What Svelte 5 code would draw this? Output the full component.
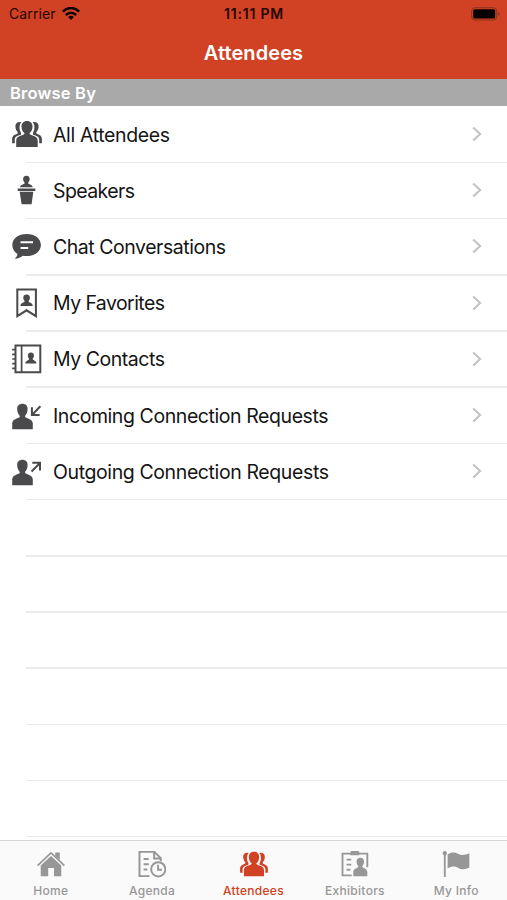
<script>
  const rows = [
    { icon: 'people', label: 'All Attendees', spacing: -0.36 },
    { icon: 'speaker', label: 'Speakers', spacing: -0.6 },
    { icon: 'chat', label: 'Chat Conversations', spacing: -0.46 },
    { icon: 'favorite', label: 'My Favorites', spacing: -0.58 },
    { icon: 'contacts', label: 'My Contacts', spacing: -0.46 },
    { icon: 'incoming', label: 'Incoming Connection Requests', spacing: -0.42 },
    { icon: 'outgoing', label: 'Outgoing Connection Requests', spacing: -0.39 }
  ];
  const blanks = [1, 2, 3, 4, 5, 6];
  const tabs = [
    { icon: 'home', label: 'Home' },
    { icon: 'agenda', label: 'Agenda' },
    { icon: 'people', label: 'Attendees', active: true },
    { icon: 'exhibitors', label: 'Exhibitors' },
    { icon: 'flag', label: 'My Info' }
  ];
</script>

{#snippet person()}
  <path d="M10.400 3.800C7.100 3.800 5 6 5.200 9.300c.1 2.900 1 5 2.500 6.400v1.200C6.300 18.700.2 18.600.2 23.500V29.200h20.600v-5.700c0-4.900-6.200-4.800-7.700-6.600v-1.200c1.500-1.400 2.400-3.500 2.500-6.400.2-3.300-1.900-5.500-5.200-5.500z" />
{/snippet}

{#snippet glyph(name)}
  <svg class="glyph" viewBox="0 0 30 30" fill="currentColor" stroke="none">
    {#if name === 'people'}
      <path d="M15 2c-3.500 0-5.600 2.300-5.500 5.700.1 3 1.100 5.100 2.900 6.400v1C11.200 16.900 4.200 16.500 4.200 21.500V28h21.500v-6.500c0-5-7-4.600-8.100-6.400v-1c1.800-1.300 2.800-3.400 2.900-6.400C20.600 4.300 18.500 2 15 2z" />
      <path d="M9.300 3.100C5.600 2.300 3.200 4.300 3.400 7.500c.1 2.400.9 4.300 2.300 5.600v1.200C4.500 15.700.1 15.800.1 19.800v4.500h2.700v-3.800c0-3.100 3.700-3.900 6.300-5v-1.400C7 10.500 7 6 9.300 3.100zM20.700 3.100c3.700-.8 6.100 1.200 5.900 4.400-.1 2.400-.9 4.300-2.300 5.600v1.200c1.200 1.400 5.600 1.500 5.600 5.500v4.500h-2.700v-3.800c0-3.100-3.700-3.900-6.300-5v-1.400c2.100-3.600 2.100-8.100-.2-11z" />
    {:else if name === 'speaker'}
      <path d="M14.400.8c-2.200 0-3.400 1.300-3.300 3.300.1 1.700.8 3 1.700 3.800-.7 1.700-4.400 1.300-4.700 4.300h12.600c-.3-3-4-2.600-4.700-4.300.9-.8 1.600-2.100 1.700-3.800.1-2-1.100-3.300-3.300-3.300zM5.700 13.400h17.600v2.500H5.700zM7.700 16.800h13.600l-1.700 12.500h-10z" />
    {:else if name === 'chat'}
      <path fill-rule="evenodd" d="M14.600 3C6.300 3 .3 7.500.3 14c0 3.800 2 7 5.100 9 .1 1.700-1.300 3.600-3 4.600 3.200.2 6.300-1 8.200-2.900 1.300.3 2.600.4 4 .4 8.300 0 14.300-4.800 14.300-11.100C28.900 7.500 22.900 3 14.600 3zM8.500 10.200v2.100H21v-2.100zm0 5.700V18h7.700v-2.100z" />
    {:else if name === 'favorite'}
      <path fill="none" stroke="currentColor" stroke-width="2" d="M5.300 1.400h18.600v26.800l-9.300-5.900-9.300 5.900z" />
      <path d="M14.600 6.500c-2.300 0-3.600 1.500-3.300 3.700.2 1.300.7 2.200 1.400 2.800-.3 2.100-4.200 1.300-4.200 4.900h12.200c0-3.600-3.900-2.800-4.200-4.900.7-.6 1.200-1.500 1.400-2.800.3-2.200-1-3.700-3.300-3.700z" />
    {:else if name === 'contacts'}
      <g fill="none" stroke="currentColor">
        <path stroke-width="2" d="M3.500 1.500h24.800v26.800H3.500z" />
        <path stroke-width="1.700" d="M9.600 1.500v27M.2 5.600h3.300M.2 10.300h3.300M.2 15h3.300M.2 19.700h3.300M.2 24.400h3.300" />
      </g>
      <path d="M18.900 8.500c-2.100 0-3.300 1.400-3 3.500.1 1.300.6 2.200 1.300 2.800-.3 2.100-3.900 1.500-3.900 4.800h11.200c0-3.300-3.600-2.700-3.900-4.800.7-.6 1.200-1.500 1.300-2.800.3-2.100-.9-3.500-3-3.500z" />
    {:else if name === 'incoming'}
      {@render person()}
      <path fill="none" stroke="currentColor" stroke-width="2" d="M28.400 6.300 20.200 14.700M19.900 7.300v7.700h7.700" />
    {:else if name === 'outgoing'}
      {@render person()}
      <path fill="none" stroke="currentColor" stroke-width="2" d="M19.500 15.500 28 7M20.300 6.800h7.700v7.700" />
    {:else if name === 'home'}
      <path d="M15 6.500 4 16.600v11.400h8v-8.600h6.200V28h7.800V16.600z" />
      <path d="M19.500 2.600h4.900v8.200l-4.900-4.600z" />
      <path fill="none" stroke="currentColor" stroke-width="1.800" d="M.6 16.800 15 3l14.400 13.800" />
    {:else if name === 'agenda'}
      <g fill="none" stroke="currentColor" stroke-width="2.100">
        <path d="M12.300 28H1.600V2h16l6.800 6.800v3.300M17.300 2.300v6.900h6.900M6 9.600h5.500M6 15.300h5.500M6 21h4" />
        <circle cx="21.700" cy="20.700" r="7.600" />
        <path d="M21.500 15.800v5.400h4.200" />
      </g>
    {:else if name === 'exhibitors'}
      <path fill="none" stroke="currentColor" stroke-width="2" d="M11.500 27.200H1.600V3.900h26.600v14.600M6 10.300h5M6 15.700h5M6 21.200h4" />
      <path d="M10 3.500c.2-1.900.5-2.300 2.200-2.300h5.300c1.700 0 2 .4 2.200 2.300v2H10z" />
      <path d="M20.700 8.200c-2.800 0-4.200 1.800-4 4.600.1 2 .9 3.700 2 4.600-.3 2.500-5.500 1.500-5.500 6.300v4.400h15v-4.400c0-4.800-5.200-3.800-5.500-6.300 1.100-.9 1.900-2.600 2-4.600.2-2.800-1.200-4.600-4-4.600z" />
    {:else if name === 'flag'}
      <circle cx="3" cy="3.500" r="2.300" />
      <path d="M2 4h2v25H2zM6 4.800c3.700-2.400 7.600-2.700 11-.8 3.900 2 7.600 1.600 12.300-.5v15.300c-4.200 2.400-8.500 2.400-12.200.2-3.200-1.900-6.700-1.600-11.100.8z" />
    {/if}
  </svg>
{/snippet}

<div class="screen">
  <header>
    <div class="status">
      <div class="carrier">
        <span>Carrier</span>
        <svg width="18" height="13" viewBox="0 0 18 13">
          <g fill="none" stroke="currentColor" stroke-width="2.400">
            <path d="M.8 4.700Q9-2.800 17.200 4.700" />
            <path d="M3.800 8Q9 3.500 14.200 8" />
          </g>
          <path d="M6.100 10q2.900-2.400 5.800 0L9 13z" fill="currentColor" />
        </svg>
      </div>
      <div class="time">11:11 PM</div>
      <div class="battery">
        <svg width="30" height="14" viewBox="0 0 30 14">
          <rect x=".7" y=".7" width="25" height="12.300" rx="3.200" fill="none" stroke="#8b301d" stroke-width="1" />
          <rect x="2.200" y="2.200" width="22" height="9.300" rx="1.600" fill="#080100" />
          <path d="M27.200 4.800q3 2.100 0 4.200z" fill="#8b301d" />
        </svg>
      </div>
    </div>
    <h1>Attendees</h1>
  </header>

  <div class="section">Browse By</div>

  <main>
    {#each rows as row}
      <div class="row">
        <div class="icon">{@render glyph(row.icon)}</div>
        <span class="label" style="letter-spacing: {row.spacing}px">{row.label}</span>
        <svg class="chevron" width="10" height="16" viewBox="0 0 10 16">
          <path d="M1.200 1.400 8.200 8l-7 6.600" fill="none" stroke="#c2c2c4" stroke-width="2" />
        </svg>
      </div>
    {/each}
    {#each blanks as blank (blank)}
      <div class="row"></div>
    {/each}
  </main>

  <nav>
    {#each tabs as tab}
      <div class="tab" class:active={tab.active}>
        {@render glyph(tab.icon)}
        <span>{tab.label}</span>
      </div>
    {/each}
  </nav>
</div>

<style>
  .screen {
    display: flex;
    flex-direction: column;
    width: 507px;
    height: 900px;
    overflow: hidden;
    background: #fff;
    color: #141414;
    font-family: Inter, "Liberation Sans", sans-serif;
  }
  header {
    flex: none;
    height: 79px;
    background: #d14124;
  }
  .status {
    display: grid;
    grid-template-columns: 1fr auto 1fr;
    align-items: center;
    height: 27px;
    padding: 0 6px 0 9px;
    color: #250703;
    font-size: 14px;
  }
  .carrier {
    display: flex;
    align-items: center;
    gap: 6px;
    letter-spacing: 0.1px;
  }
  .carrier svg {
    color: #0b0200;
  }
  .time {
    font-weight: 600;
    letter-spacing: 0.8px;
    transform: translateX(-1px);
  }
  .battery {
    display: flex;
    justify-content: flex-end;
  }
  h1 {
    margin: 0;
    color: #fff;
    font-size: 20px;
    font-weight: 600;
    line-height: 52px;
    letter-spacing: 0.1px;
    text-align: center;
  }
  .section {
    flex: none;
    height: 27px;
    box-sizing: border-box;
    padding-left: 10px;
    background: #a9a9a9;
    color: #fff;
    font-size: 16.500px;
    font-weight: 600;
    line-height: 28px;
    letter-spacing: 0.2px;
  }
  main {
    flex: none;
    height: 734px;
    overflow: hidden;
  }
  .row {
    position: relative;
    display: flex;
    align-items: center;
    height: 56.200px;
    padding: 0 25px 0 12px;
  }
  .row::after {
    content: "";
    position: absolute;
    left: 26px;
    right: 0;
    bottom: -1px;
    height: 1.500px;
    background: #ebebec;
  }
  .icon {
    width: 30px;
    height: 30px;
    margin-right: 11px;
    color: #4a4a4c;
  }
  .glyph {
    display: block;
    width: 30px;
    height: 30px;
  }
  .label {
    flex: 1;
    padding-top: 1px;
    font-size: 19.500px;
    white-space: nowrap;
  }
  nav {
    flex: none;
    display: flex;
    box-sizing: border-box;
    height: 60px;
    border-top: 1px solid #d5d5d5;
    background: #fafafa;
    color: #979797;
  }
  .tab {
    flex: 1;
    display: flex;
    flex-direction: column;
    align-items: center;
    padding-top: 9px;
    font-size: 12px;
    font-weight: 500;
    letter-spacing: 0.300px;
  }
  .tab .glyph {
    width: 28px;
    height: 28px;
  }
  .tab span {
    margin-top: 5px;
    line-height: 16px;
  }
  .active {
    color: #d14124;
  }
</style>
